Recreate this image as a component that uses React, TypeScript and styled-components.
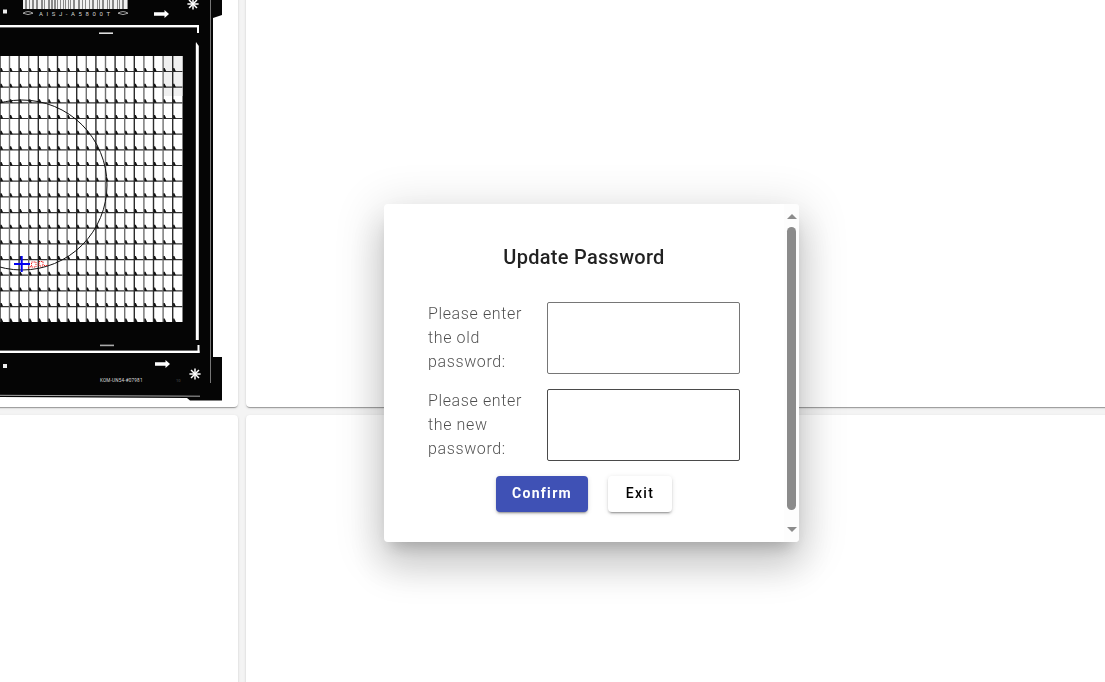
import React from 'react';
import styled, { createGlobalStyle } from 'styled-components';

const Global = createGlobalStyle`
  html, body { margin: 0; padding: 0; height: 100%; overflow: hidden; background: #f4f4f4; }
  body { font-family: Roboto, "Liberation Sans", sans-serif; }
`;

const Board = styled.main`
  display: grid;
  grid-template-columns: 246px 1fr;
  grid-template-rows: 415px 1fr;
  gap: 8px;
  margin: -8px -8px -8px -8px;
  height: 698px;
`;

const Card = styled.section`
  background: #fff;
  border-radius: 4px;
  overflow: hidden;
  box-shadow: 0 2px 1px -1px rgba(0,0,0,.2), 0 1px 1px 0 rgba(0,0,0,.14), 0 1px 3px 0 rgba(0,0,0,.12);
  padding: 8px 0 0 8px;
`;

const WaferSvg = styled.svg`
  display: block;
  width: 222px;
  height: 401px;
`;

const Modal = styled.div`
  position: fixed;
  left: 384px;
  top: 204px;
  width: 415px;
  height: 338px;
  display: flex;
  background: #fff;
  border-radius: 4px;
  overflow: hidden;
  box-shadow: 0 11px 15px -7px rgba(0,0,0,.2), 0 24px 38px 3px rgba(0,0,0,.14), 0 9px 46px 8px rgba(0,0,0,.12);
`;

const Body = styled.form`
  flex: 1;
  min-width: 0;
  display: flex;
  flex-direction: column;
  padding: 41px 44px 0;
`;

const Title = styled.h2`
  margin: 0 0 33px;
  font: 500 20px/24px Roboto, sans-serif;
  letter-spacing: 0.28px;
  color: rgba(0,0,0,.87);
  text-align: center;
`;

const Row = styled.label`
  display: flex;
  margin-bottom: 15px;
`;

const LabelText = styled.span`
  width: 119px;
  flex: none;
  padding-right: 16px;
  box-sizing: border-box;
  font: 300 16px/24px Roboto, sans-serif;
  letter-spacing: 0.62px;
  color: rgba(0,0,0,.7);
`;

const Field = styled.input<{ $hovered?: boolean }>`
  width: 193px;
  height: 72px;
  box-sizing: border-box;
  margin: 0;
  border: 1px solid ${p => (p.$hovered ? '#4a4a4a' : '#767676')};
  border-radius: 2px;
  background: #fff;
  outline: none;
`;

const Actions = styled.div`
  display: flex;
  justify-content: center;
  gap: 20px;
`;

const Button = styled.button<{ $primary?: boolean }>`
  height: 36px;
  width: ${p => (p.$primary ? '92px' : '64px')};
  padding: 0 0 2px;
  border: 0;
  border-radius: 4px;
  background: ${p => (p.$primary ? '#3f51b5' : '#fff')};
  color: ${p => (p.$primary ? '#fff' : '#000')};
  font: ${p => (p.$primary ? 700 : 500)} 14px/34px Roboto, sans-serif;
  letter-spacing: 1.3px;
  box-shadow: 0 3px 1px -2px rgba(0,0,0,.2), 0 2px 2px 0 rgba(0,0,0,.14), 0 1px 5px 0 rgba(0,0,0,.12);
`;

const ScrollTrack = styled.div`
  flex: none;
  width: 15px;
  display: flex;
  flex-direction: column;
  align-items: center;
  background: #fdfdfd;
`;

const Arrow = styled.span<{ $down?: boolean }>`
  display: block;
  flex: none;
  width: 0;
  height: 0;
  margin: ${p => (p.$down ? '17px 0 0' : '10px 0 8px')};
  border-left: 5px solid transparent;
  border-right: 5px solid transparent;
  ${p => (p.$down ? 'border-top: 5px solid #8c8c8c;' : 'border-bottom: 5px solid #8c8c8c;')}
`;

const Thumb = styled.div`
  flex: none;
  width: 9px;
  height: 283px;
  border-radius: 4.5px;
  background: #8b8b8b;
`;

const cols = Array.from({ length: 19 }, (_, i) => i * 9.6 - (i > 0 ? 0.1 : 0));
const rows = Array.from({ length: 16 }, (_, i) => 71.5 + i * 15.67);

const bars: Array<[number, number]> = (() => {
  const out: Array<[number, number]> = [];
  let x = 23;
  let seed = 7;
  while (x < 128) {
    seed = (seed * 31 + 11) % 97;
    const w = 1 + (seed % 3);
    out.push([x, w]);
    seed = (seed * 17 + 3) % 89;
    x += w + 1 + (seed % 2);
  }
  return out;
})();

const Star = ({ x, y }: { x: number; y: number }) => (
  <g stroke="#fff" strokeWidth="1.5" transform={`translate(${x} ${y})`}>
    {[0, 45, 90, 135].map(a => (
      <line key={a} x1="-5.6" y1="0" x2="5.6" y2="0" transform={`rotate(${a})`} />
    ))}
  </g>
);

const RightArrow = ({ x, y }: { x: number; y: number }) => (
  <path fill="#fff" transform={`translate(${x} ${y})`} d="M0 -1.7H10.5V-4L15 0L10.5 4V1.7H0Z" />
);

const Wafer = () => (
  <WaferSvg viewBox="0 0 222 401" aria-label="wafer map">
    <path fill="#050505" d="M0 0H222V15L213 18V357L222 357V400.5H190L187 398L0 397Z" />
    <rect x="0" y="56" width="182.5" height="266" fill="#fff" />
    <rect x="163" y="56" width="19.5" height="40" fill="#f0f0f0" />
    {rows.map(y => (
      <line key={y} x1="0" x2="182.5" y1={y} y2={y} stroke="#333" strokeWidth="1.2" />
    ))}
    {cols.map((x, i) => (
      <line
        key={x}
        x1={x}
        x2={x}
        y1="56"
        y2="322"
        stroke={i % 2 ? '#707070' : '#2c2c2c'}
        strokeWidth="1.4"
      />
    ))}
    {rows.concat(322).flatMap(y =>
      cols.map(x => (
        <path key={`${x}-${y}`} fill="#111" d={`M${x + 0.4} ${y}V${y - 3.5}L${x + 1.6} ${y - 3.5}L${x + 3.2} ${y}Z`} />
      ))
    )}
    <circle cx="22" cy="185" r="85" fill="none" stroke="#111" strokeWidth="1" />

    <rect x="0" y="25" width="199" height="2.4" fill="#fff" />
    <rect x="197" y="25" width="2" height="8" fill="#fff" />
    <path fill="#fff" d="M196 42L198.8 46V340H195.8V44Z" />
    <rect x="0" y="350.6" width="199.5" height="2.4" fill="#fff" />
    <rect x="197.5" y="345" width="2" height="8" fill="#fff" />
    <rect x="210" y="0" width="1" height="383" fill="#777" />
    <rect x="99" y="32.4" width="14" height="1.6" fill="#ddd" />
    <rect x="100" y="344.6" width="14" height="1.6" fill="#aaa" />
    <path d="M0 395.3L200 396.2" stroke="#aaa" strokeWidth="1" />

    <rect x="23" y="0" width="105" height="9" fill="#8a8a8a" />
    {bars.map(([x, w]) => (
      <rect key={x} x={x} y="0" width={w} height="9" fill="#f2f2f2" />
    ))}
    <path d="M23 13.2Q28 10 33 13.2Q28 16 23 13.2Z" fill="none" stroke="#ccc" strokeWidth=".8" />
    <path d="M118 13.2Q123 10 128 13.2Q123 16 118 13.2Z" fill="none" stroke="#ccc" strokeWidth=".8" />
    <text x="39" y="15.5" fontFamily="Roboto, sans-serif" fontSize="6" letterSpacing="3.6" fill="#d4d4d4">AISJ-A5800T</text>
    <rect x="3" y="9.5" width="4" height="4" fill="#eee" />
    <rect x="3" y="364" width="4" height="4" fill="#eee" />
    <RightArrow x={154} y={14} />
    <RightArrow x={155} y={364} />
    <Star x={193} y={4} />
    <Star x={195} y={374} />
    <text x="100" y="382" fontFamily="Roboto, sans-serif" fontSize="4.6" letterSpacing=".2" fill="#ddd">KOM-UN54-#07981</text>
    <text x="176" y="382" fontFamily="Roboto, sans-serif" fontSize="4" fill="#555">10</text>

    <g fill="none" stroke="#0000f0" strokeWidth="2">
      <line x1="14" x2="30" y1="264" y2="264" />
      <line x1="21.7" x2="21.7" y1="256" y2="272" />
    </g>
    <g fill="none" stroke="#f01818" strokeWidth="1" strokeDasharray="1.2 .9">
      <rect x="31.5" y="262" width="4.5" height="5" />
      <rect x="39" y="261.5" width="4" height="4.5" />
      <path d="M44 265.5H48" />
      <path d="M28 268L31 266.5" />
    </g>
  </WaferSvg>
);

export default function App() {
  return (
    <>
      <Global />
      <Board>
        <Card><Wafer /></Card>
        <Card />
        <Card />
        <Card />
      </Board>
      <Modal role="dialog">
        <Body>
          <Title>Update Password</Title>
          <Row>
            <LabelText>Please enter the old password:</LabelText>
            <Field type="password" />
          </Row>
          <Row>
            <LabelText>Please enter the new password:</LabelText>
            <Field type="password" $hovered />
          </Row>
          <Actions>
            <Button type="button" $primary>Confirm</Button>
            <Button type="button">Exit</Button>
          </Actions>
        </Body>
        <ScrollTrack>
          <Arrow />
          <Thumb />
          <Arrow $down />
        </ScrollTrack>
      </Modal>
    </>
  );
}
